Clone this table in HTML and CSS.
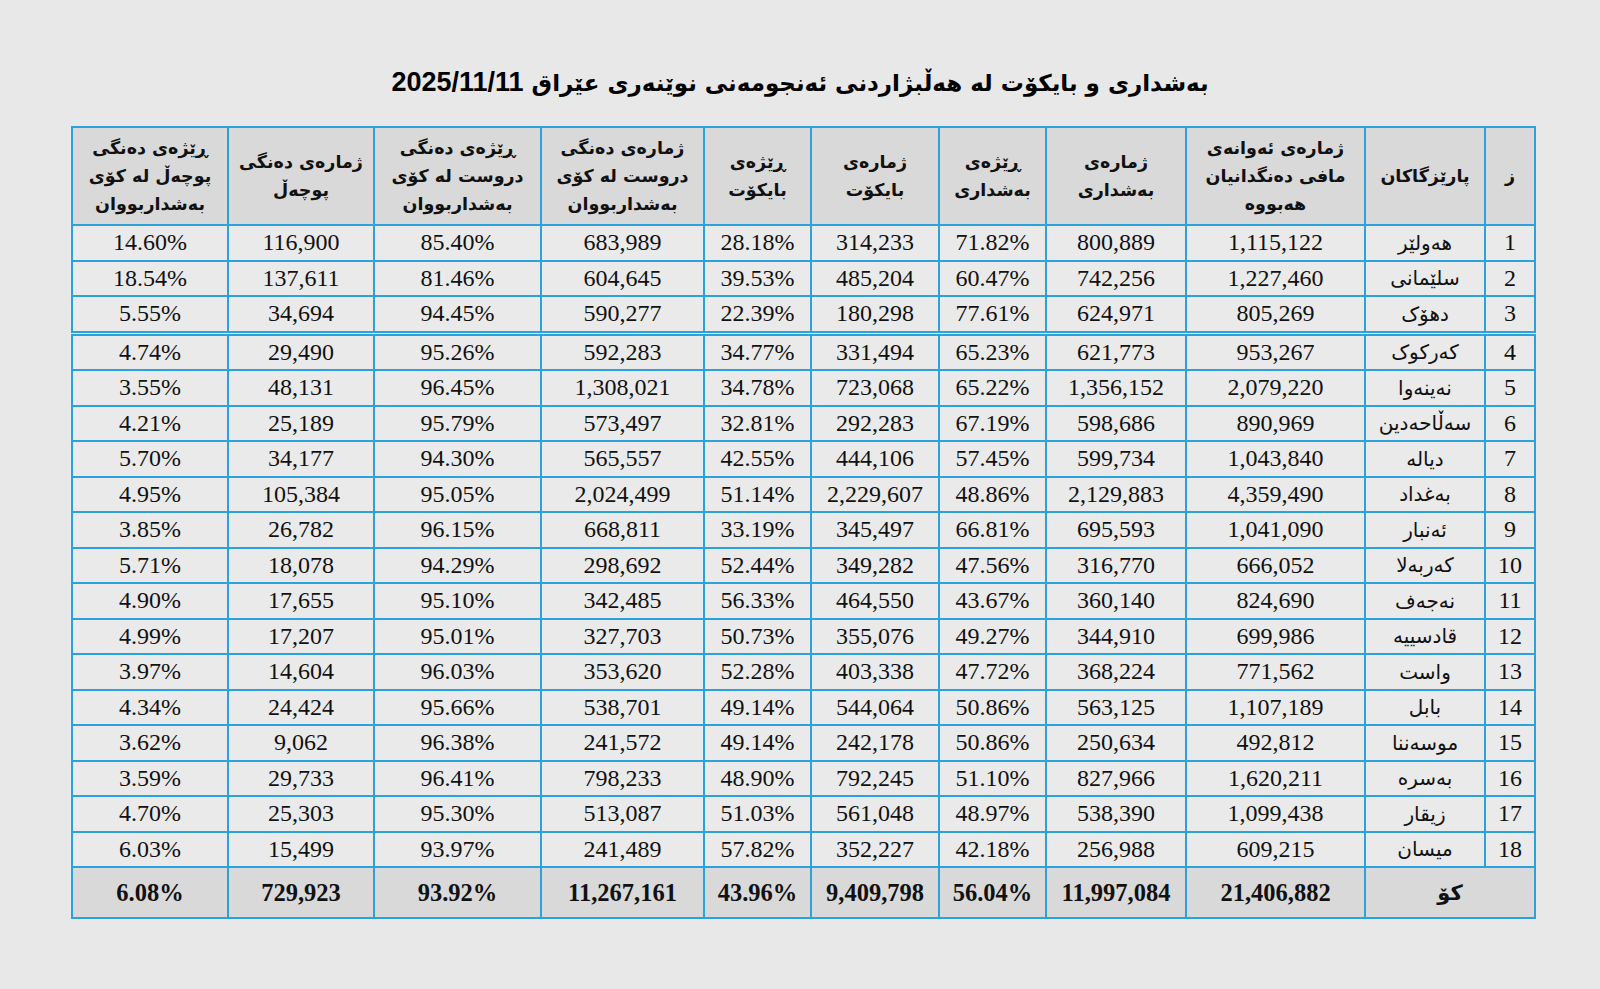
FILE: index.html
```html
<!DOCTYPE html>
<html lang="ckb">
<head>
<meta charset="utf-8">
<title>بەشداری و بایکۆت</title>
<link rel="stylesheet" href="styles.css">
</head>
<body>
<main class="page">
  <h1 class="title" dir="rtl">بەشداری و بایکۆت لە هەڵبژاردنی ئەنجومەنی نوێنەری عێراق <span class="title-date">2025/11/11</span></h1>
  <table class="results" dir="rtl">
    <colgroup>
      <col class="c-no"><col class="c-gov"><col class="c-elig"><col class="c-part"><col class="c-partp"><col class="c-boy"><col class="c-boyp"><col class="c-valid"><col class="c-validp"><col class="c-inv"><col class="c-invp">
    </colgroup>
    <thead>
      <tr>
        <th>ز</th>
        <th>پارێزگاکان</th>
        <th>ژمارەی ئەوانەی<br>مافی دەنگدانیان<br>هەبووە</th>
        <th>ژمارەی<br>بەشداری</th>
        <th>ڕێژەی<br>بەشداری</th>
        <th>ژمارەی<br>بایکۆت</th>
        <th>ڕێژەی<br>بایکۆت</th>
        <th>ژمارەی دەنگی<br>دروست لە کۆی<br>بەشداربووان</th>
        <th>ڕێژەی دەنگی<br>دروست لە کۆی<br>بەشداربووان</th>
        <th>ژمارەی دەنگی<br>پوچەڵ</th>
        <th>ڕێژەی دەنگی<br>پوچەڵ لە کۆی<br>بەشداربووان</th>
      </tr>
    </thead>
    <tbody>
      <tr><td class="num">1</td><td class="name">هەولێر</td><td class="num">1,115,122</td><td class="num">800,889</td><td class="num">71.82%</td><td class="num">314,233</td><td class="num">28.18%</td><td class="num">683,989</td><td class="num">85.40%</td><td class="num">116,900</td><td class="num">14.60%</td></tr>
      <tr><td class="num">2</td><td class="name">سلێمانی</td><td class="num">1,227,460</td><td class="num">742,256</td><td class="num">60.47%</td><td class="num">485,204</td><td class="num">39.53%</td><td class="num">604,645</td><td class="num">81.46%</td><td class="num">137,611</td><td class="num">18.54%</td></tr>
      <tr class="split"><td class="num">3</td><td class="name">دهۆک</td><td class="num">805,269</td><td class="num">624,971</td><td class="num">77.61%</td><td class="num">180,298</td><td class="num">22.39%</td><td class="num">590,277</td><td class="num">94.45%</td><td class="num">34,694</td><td class="num">5.55%</td></tr>
      <tr><td class="num">4</td><td class="name">کەرکوک</td><td class="num">953,267</td><td class="num">621,773</td><td class="num">65.23%</td><td class="num">331,494</td><td class="num">34.77%</td><td class="num">592,283</td><td class="num">95.26%</td><td class="num">29,490</td><td class="num">4.74%</td></tr>
      <tr><td class="num">5</td><td class="name">نەینەوا</td><td class="num">2,079,220</td><td class="num">1,356,152</td><td class="num">65.22%</td><td class="num">723,068</td><td class="num">34.78%</td><td class="num">1,308,021</td><td class="num">96.45%</td><td class="num">48,131</td><td class="num">3.55%</td></tr>
      <tr><td class="num">6</td><td class="name">سەڵاحەدین</td><td class="num">890,969</td><td class="num">598,686</td><td class="num">67.19%</td><td class="num">292,283</td><td class="num">32.81%</td><td class="num">573,497</td><td class="num">95.79%</td><td class="num">25,189</td><td class="num">4.21%</td></tr>
      <tr><td class="num">7</td><td class="name">دیالە</td><td class="num">1,043,840</td><td class="num">599,734</td><td class="num">57.45%</td><td class="num">444,106</td><td class="num">42.55%</td><td class="num">565,557</td><td class="num">94.30%</td><td class="num">34,177</td><td class="num">5.70%</td></tr>
      <tr><td class="num">8</td><td class="name">بەغداد</td><td class="num">4,359,490</td><td class="num">2,129,883</td><td class="num">48.86%</td><td class="num">2,229,607</td><td class="num">51.14%</td><td class="num">2,024,499</td><td class="num">95.05%</td><td class="num">105,384</td><td class="num">4.95%</td></tr>
      <tr><td class="num">9</td><td class="name">ئەنبار</td><td class="num">1,041,090</td><td class="num">695,593</td><td class="num">66.81%</td><td class="num">345,497</td><td class="num">33.19%</td><td class="num">668,811</td><td class="num">96.15%</td><td class="num">26,782</td><td class="num">3.85%</td></tr>
      <tr><td class="num">10</td><td class="name">کەربەلا</td><td class="num">666,052</td><td class="num">316,770</td><td class="num">47.56%</td><td class="num">349,282</td><td class="num">52.44%</td><td class="num">298,692</td><td class="num">94.29%</td><td class="num">18,078</td><td class="num">5.71%</td></tr>
      <tr><td class="num">11</td><td class="name">نەجەف</td><td class="num">824,690</td><td class="num">360,140</td><td class="num">43.67%</td><td class="num">464,550</td><td class="num">56.33%</td><td class="num">342,485</td><td class="num">95.10%</td><td class="num">17,655</td><td class="num">4.90%</td></tr>
      <tr><td class="num">12</td><td class="name">قادسییە</td><td class="num">699,986</td><td class="num">344,910</td><td class="num">49.27%</td><td class="num">355,076</td><td class="num">50.73%</td><td class="num">327,703</td><td class="num">95.01%</td><td class="num">17,207</td><td class="num">4.99%</td></tr>
      <tr><td class="num">13</td><td class="name">واست</td><td class="num">771,562</td><td class="num">368,224</td><td class="num">47.72%</td><td class="num">403,338</td><td class="num">52.28%</td><td class="num">353,620</td><td class="num">96.03%</td><td class="num">14,604</td><td class="num">3.97%</td></tr>
      <tr><td class="num">14</td><td class="name">بابل</td><td class="num">1,107,189</td><td class="num">563,125</td><td class="num">50.86%</td><td class="num">544,064</td><td class="num">49.14%</td><td class="num">538,701</td><td class="num">95.66%</td><td class="num">24,424</td><td class="num">4.34%</td></tr>
      <tr><td class="num">15</td><td class="name">موسەننا</td><td class="num">492,812</td><td class="num">250,634</td><td class="num">50.86%</td><td class="num">242,178</td><td class="num">49.14%</td><td class="num">241,572</td><td class="num">96.38%</td><td class="num">9,062</td><td class="num">3.62%</td></tr>
      <tr><td class="num">16</td><td class="name">بەسرە</td><td class="num">1,620,211</td><td class="num">827,966</td><td class="num">51.10%</td><td class="num">792,245</td><td class="num">48.90%</td><td class="num">798,233</td><td class="num">96.41%</td><td class="num">29,733</td><td class="num">3.59%</td></tr>
      <tr><td class="num">17</td><td class="name">زیقار</td><td class="num">1,099,438</td><td class="num">538,390</td><td class="num">48.97%</td><td class="num">561,048</td><td class="num">51.03%</td><td class="num">513,087</td><td class="num">95.30%</td><td class="num">25,303</td><td class="num">4.70%</td></tr>
      <tr><td class="num">18</td><td class="name">میسان</td><td class="num">609,215</td><td class="num">256,988</td><td class="num">42.18%</td><td class="num">352,227</td><td class="num">57.82%</td><td class="num">241,489</td><td class="num">93.97%</td><td class="num">15,499</td><td class="num">6.03%</td></tr>
    </tbody>
    <tfoot>
      <tr><td class="name" colspan="2">کۆ</td><td class="num">21,406,882</td><td class="num">11,997,084</td><td class="num">56.04%</td><td class="num">9,409,798</td><td class="num">43.96%</td><td class="num">11,267,161</td><td class="num">93.92%</td><td class="num">729,923</td><td class="num">6.08%</td></tr>
    </tfoot>
  </table>
</main>
</body>
</html>
```
FILE: styles.css
```css
html, body {
  margin: 0;
  background: #e8e8e8;
}

.page {
  padding-top: 60px;
  padding-bottom: 60px;
}

.title {
  margin: 0 0 21px;
  text-align: center;
  font-family: "DejaVu Sans", sans-serif;
  font-weight: bold;
  font-size: 23px;
  line-height: 44px;
  color: #000;
}

.title-date {
  font-family: "Liberation Sans", Arial, sans-serif;
  font-size: 27px;
}

.results {
  margin-left: 71px;
  width: 1463px;
  table-layout: fixed;
  border-collapse: collapse;
  color: #111;
}

.c-no { width: 50px; }
.c-gov { width: 120px; }
.c-elig { width: 179px; }
.c-part { width: 140px; }
.c-partp { width: 107px; }
.c-boy { width: 128px; }
.c-boyp { width: 107px; }
.c-valid { width: 163px; }
.c-validp { width: 167px; }
.c-inv { width: 146px; }
.c-invp { width: 156px; }

.results th,
.results td {
  border: 2px solid #2ba2db;
  padding: 0;
  text-align: center;
  vertical-align: middle;
}

.results th {
  height: 96px;
  background: #d9d9d9;
  font-family: "DejaVu Sans", sans-serif;
  font-weight: bold;
  font-size: 17.5px;
  line-height: 28px;
  color: #111;
}

.results tbody td {
  height: 33.5px;
  background: #eaeaea;
}

.results .num {
  direction: ltr;
  font-family: "Liberation Serif", "Times New Roman", serif;
  font-size: 24px;
}

.results .name {
  font-family: "DejaVu Sans", sans-serif;
  font-size: 20px;
}

.results tr.split td {
  border-bottom: 5px double #2ba2db;
}

.results tfoot td {
  height: 49px;
  background: #d9d9d9;
  font-weight: bold;
}

.results tfoot .num {
  font-size: 24.5px;
}

.results tfoot .name {
  font-size: 21px;
}
```
